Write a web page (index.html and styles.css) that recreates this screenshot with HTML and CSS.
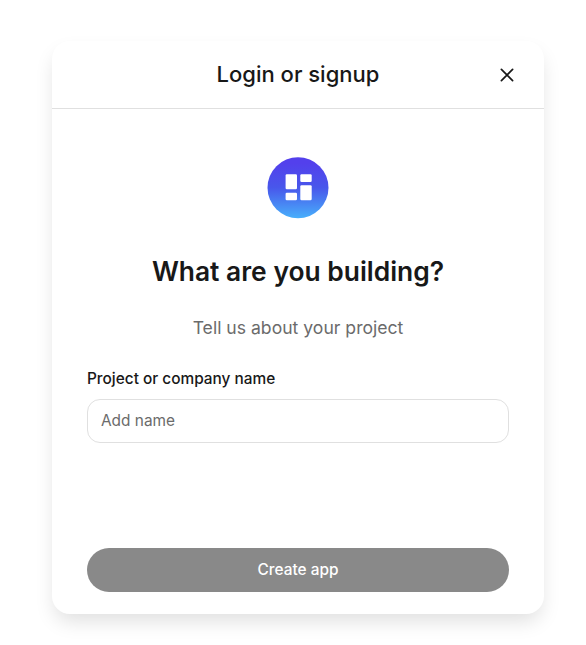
FILE: index.html
```html
<!DOCTYPE html>
<html lang="en">
<head>
<meta charset="utf-8">
<title>Login or signup</title>
<link rel="stylesheet" href="styles.css">
</head>
<body>
<main class="modal">
  <header class="header">
    <h1 class="title">Login or signup</h1>
    <button class="close" type="button" aria-label="Close">
      <svg width="14" height="14" viewBox="0 0 14 14" fill="none" stroke="#181818" stroke-width="1.700" stroke-linecap="round"><path d="M1.400 1.400l11.200 11.200M12.600 1.400l-11.200 11.200"/></svg>
    </button>
  </header>
  <form class="content">
    <svg class="logo" width="62" height="62" viewBox="0 0 62 62">
      <defs><linearGradient id="g" x1="0" y1="0" x2="0" y2="1"><stop offset=".1" stop-color="#5340ec"/><stop offset=".5" stop-color="#4857eb"/><stop offset="1" stop-color="#48affb"/></linearGradient></defs>
      <circle cx="31" cy="30.700" r="30.500" fill="url(#g)"/>
      <g fill="#fff"><rect x="18.600" y="17.300" width="11.400" height="15" rx="1.200"/><rect x="33.300" y="17.300" width="11.400" height="7.700" rx="1.200"/><rect x="18.600" y="35.800" width="11.400" height="7.500" rx="1.200"/><rect x="33.300" y="28.300" width="11.400" height="15" rx="1.200"/></g>
    </svg>
    <h2 class="heading">What are you building?</h2>
    <p class="subtitle">Tell us about your project</p>
    <label class="label" for="name">Project or company name</label>
    <input class="input" id="name" type="text" placeholder="Add name">
    <button class="submit" type="button">Create app</button>
  </form>
</main>
</body>
</html>
```
FILE: styles.css
```css
* { box-sizing: border-box; }
body { margin: 0; padding: 41px 42px 31px 52px; background: #fff; color: #181818; font-family: Inter, sans-serif; }
h1, h2, p { margin: 0; }
button, input { font: inherit; }
.modal { display: flex; flex-direction: column; height: 573px; background: #fff; border-radius: 18px; box-shadow: 0 10px 20px -3px rgba(0, 0, 0, .13); }
.header { display: grid; grid-template-columns: 74px 1fr 74px; align-items: center; height: 68px; border-bottom: 1px solid #e0e0e0; }
.title { grid-column: 2; padding-bottom: 2px; text-align: center; font-size: 22px; line-height: 28px; font-weight: 500; }
.close { display: flex; justify-self: center; padding: 0; border: 0; background: none; }
.content { display: flex; flex: 1; flex-direction: column; padding: 48px 35px 22px; }
.logo { align-self: center; }
.heading { margin-top: 34px; text-align: center; font-size: 26.400px; line-height: 36px; font-weight: 600; }
.subtitle { margin-top: 27px; text-align: center; color: #6b6b6b; font-size: 17.600px; line-height: 24px; }
.label { margin-top: 28px; font-size: 15.400px; line-height: 22px; font-weight: 500; }
.input { height: 44px; margin-top: 9px; padding: 0 13px 2px; border: 1px solid #e0e0e0; border-radius: 13px; background: #fff; font-size: 15.400px; }
.input::placeholder { color: #6b6b6b; opacity: 1; }
.submit { height: 44px; margin-top: auto; padding: 0 0 2px; border: 0; border-radius: 22px; background: #898989; color: #fff; font-size: 15.400px; font-weight: 500; }
```
